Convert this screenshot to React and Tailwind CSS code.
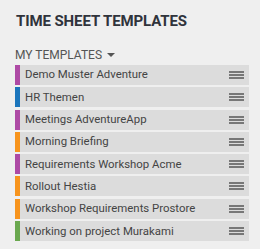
const templates = [
  { name: "Demo Muster Adventure", color: "bg-[#ae4aa5]" },
  { name: "HR Themen", color: "bg-[#1b75bc]" },
  { name: "Meetings AdventureApp", color: "bg-[#ae4aa5]" },
  { name: "Morning Briefing", color: "bg-[#f7941d]" },
  { name: "Requirements Workshop Acme", color: "bg-[#ae4aa5]" },
  { name: "Rollout Hestia", color: "bg-[#f7941d]" },
  { name: "Workshop Requirements Prostore", color: "bg-[#f7941d]" },
  { name: "Working on project Murakami", color: "bg-[#6aa84f]" },
];

function Handle() {
  return (
    <div className="flex flex-col gap-[1px] w-[15px]">
      <span className="h-[2px] bg-[#777]" />
      <span className="h-[2px] bg-[#777]" />
      <span className="h-[2px] bg-[#777]" />
    </div>
  );
}

export default function App() {
  return (
    <div className="w-[260px] h-[249px] bg-[#efefef] pl-[15px] pt-[11px] font-['Roboto',sans-serif]">
      <h1 className="ml-[1px] text-[15px] leading-[20px] font-bold text-[#2f333b] tracking-[-0.1px]">TIME SHEET TEMPLATES</h1>
      <div className="mt-[16px] flex items-center text-[12px] leading-[16px] text-[#555]">
        MY TEMPLATES
        <span className="ml-[5px] w-0 h-0 border-l-[4px] border-r-[4px] border-t-[4px] border-l-transparent border-r-transparent border-t-[#555]" />
      </div>
      <div className="mt-[2px] w-[234px] flex flex-col gap-[2.3px]">
        {templates.map((t) => (
          <div key={t.name} className="h-[20px] flex items-center bg-[#dcdcdc]">
            <span className={`w-[5px] h-full ${t.color}`} />
            <span className="flex-1 pl-[5px] text-[11.4px] text-[#444] truncate">{t.name}</span>
            <div className="mr-[5px]">
              <Handle />
            </div>
          </div>
        ))}
      </div>
    </div>
  );
}
